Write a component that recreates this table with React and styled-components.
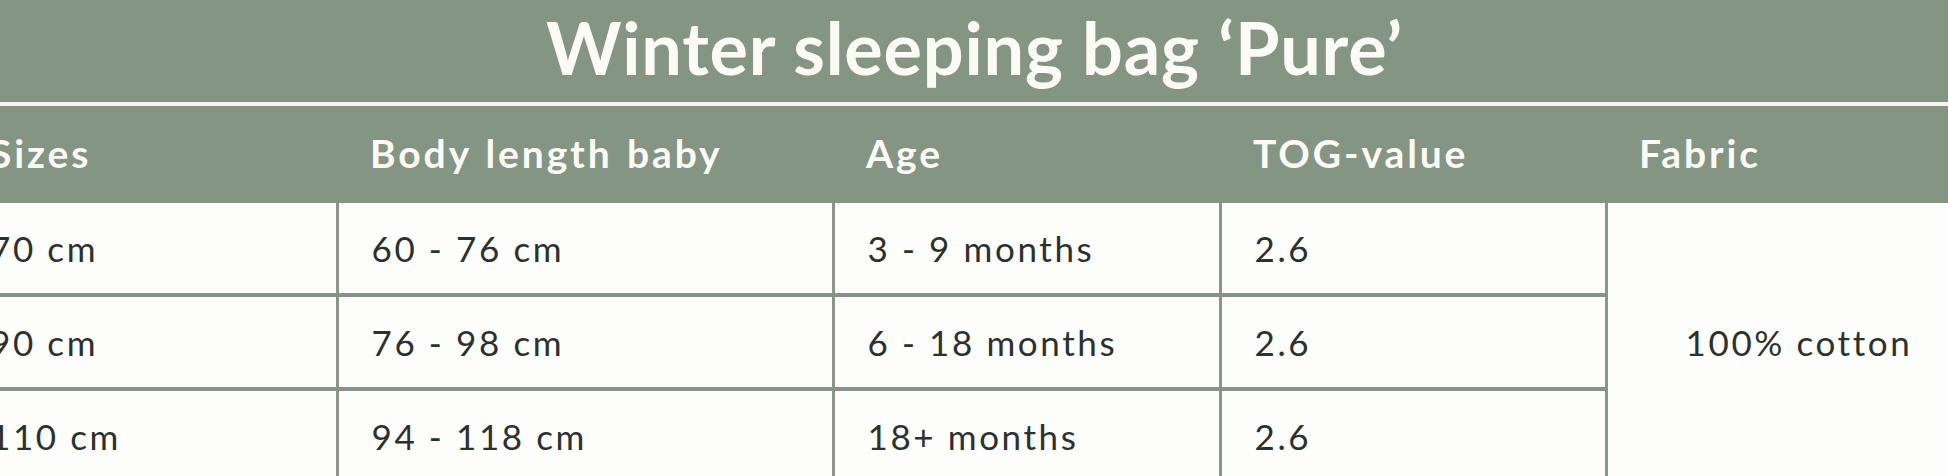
import React from 'react';
import styled, { createGlobalStyle } from 'styled-components';

const GlobalStyle = createGlobalStyle`
  html, body {
    margin: 0;
    padding: 0;
    background: #fdfdfb;
    overflow: hidden;
  }
  body {
    font-family: Lato, "Open Sans", sans-serif;
  }
`;

const sage = '#859583';

const Page = styled.div`
  width: 1948px;
  height: 476px;
  overflow: hidden;
  background: #fdfdfb;
`;

const Sheet = styled.div`
  width: 2035px;
  margin-left: -43px;
`;

const Title = styled.h1`
  margin: 0;
  height: 106px;
  box-sizing: border-box;
  padding-bottom: 8px;
  display: flex;
  align-items: center;
  justify-content: center;
  background: ${sage};
  border-bottom: 4px solid #f3f5ee;
  color: #fbfbf6;
  font-size: 72px;
  font-weight: 700;
  letter-spacing: 0.8px;
`;

const Table = styled.table`
  width: 100%;
  border-collapse: collapse;
  table-layout: fixed;
`;

const Head = styled.th`
  height: 93px;
  padding: 0 0 4px 33px;
  background: ${sage};
  color: #fbfbf6;
  text-align: left;
  font-size: 39px;
  font-weight: 700;
  letter-spacing: 2.9px;
  word-spacing: 2px;
`;

const Cell = styled.td`
  height: 90px;
  padding: 0 0 0 ${(p) => (p.$center ? 0 : 33)}px;
  text-align: ${(p) => (p.$center ? 'center' : 'left')};
  border: 3px solid #8b968a;
  border-width: 0 3px 4px 0;
  border-bottom-color: #8a9188;
  color: #2b322d;
  font-size: 35px;
  font-weight: 400;
  letter-spacing: 2.6px;
  background: #fdfdfb;
`;

const columns = [
  { label: 'Sizes', width: 380 },
  { label: 'Body length baby', width: 496 },
  { label: 'Age', width: 387 },
  { label: 'TOG-value', width: 386 },
  { label: 'Fabric', width: 386 },
];

const rows = [
  ['70 cm', '60 - 76 cm', '3 - 9 months', '2.6'],
  ['90 cm', '76 - 98 cm', '6 - 18 months', '2.6'],
  ['110 cm', '94 - 118 cm', '18+ months', '2.6'],
];

export default function App() {
  return (
    <Page>
      <GlobalStyle />
      <Sheet>
        <Title>Winter sleeping bag ‘Pure’</Title>
        <Table>
          <colgroup>
            {columns.map((c) => (
              <col key={c.label} style={{ width: c.width }} />
            ))}
          </colgroup>
          <thead>
            <tr>
              {columns.map((c) => (
                <Head key={c.label}>{c.label}</Head>
              ))}
            </tr>
          </thead>
          <tbody>
            {rows.map((r, i) => (
              <tr key={r[0]}>
                {r.map((v, j) => (
                  <Cell key={j}>{v}</Cell>
                ))}
                {i === 0 && (
                  <Cell $center rowSpan={3}>
                    100% cotton
                  </Cell>
                )}
              </tr>
            ))}
          </tbody>
        </Table>
      </Sheet>
    </Page>
  );
}
